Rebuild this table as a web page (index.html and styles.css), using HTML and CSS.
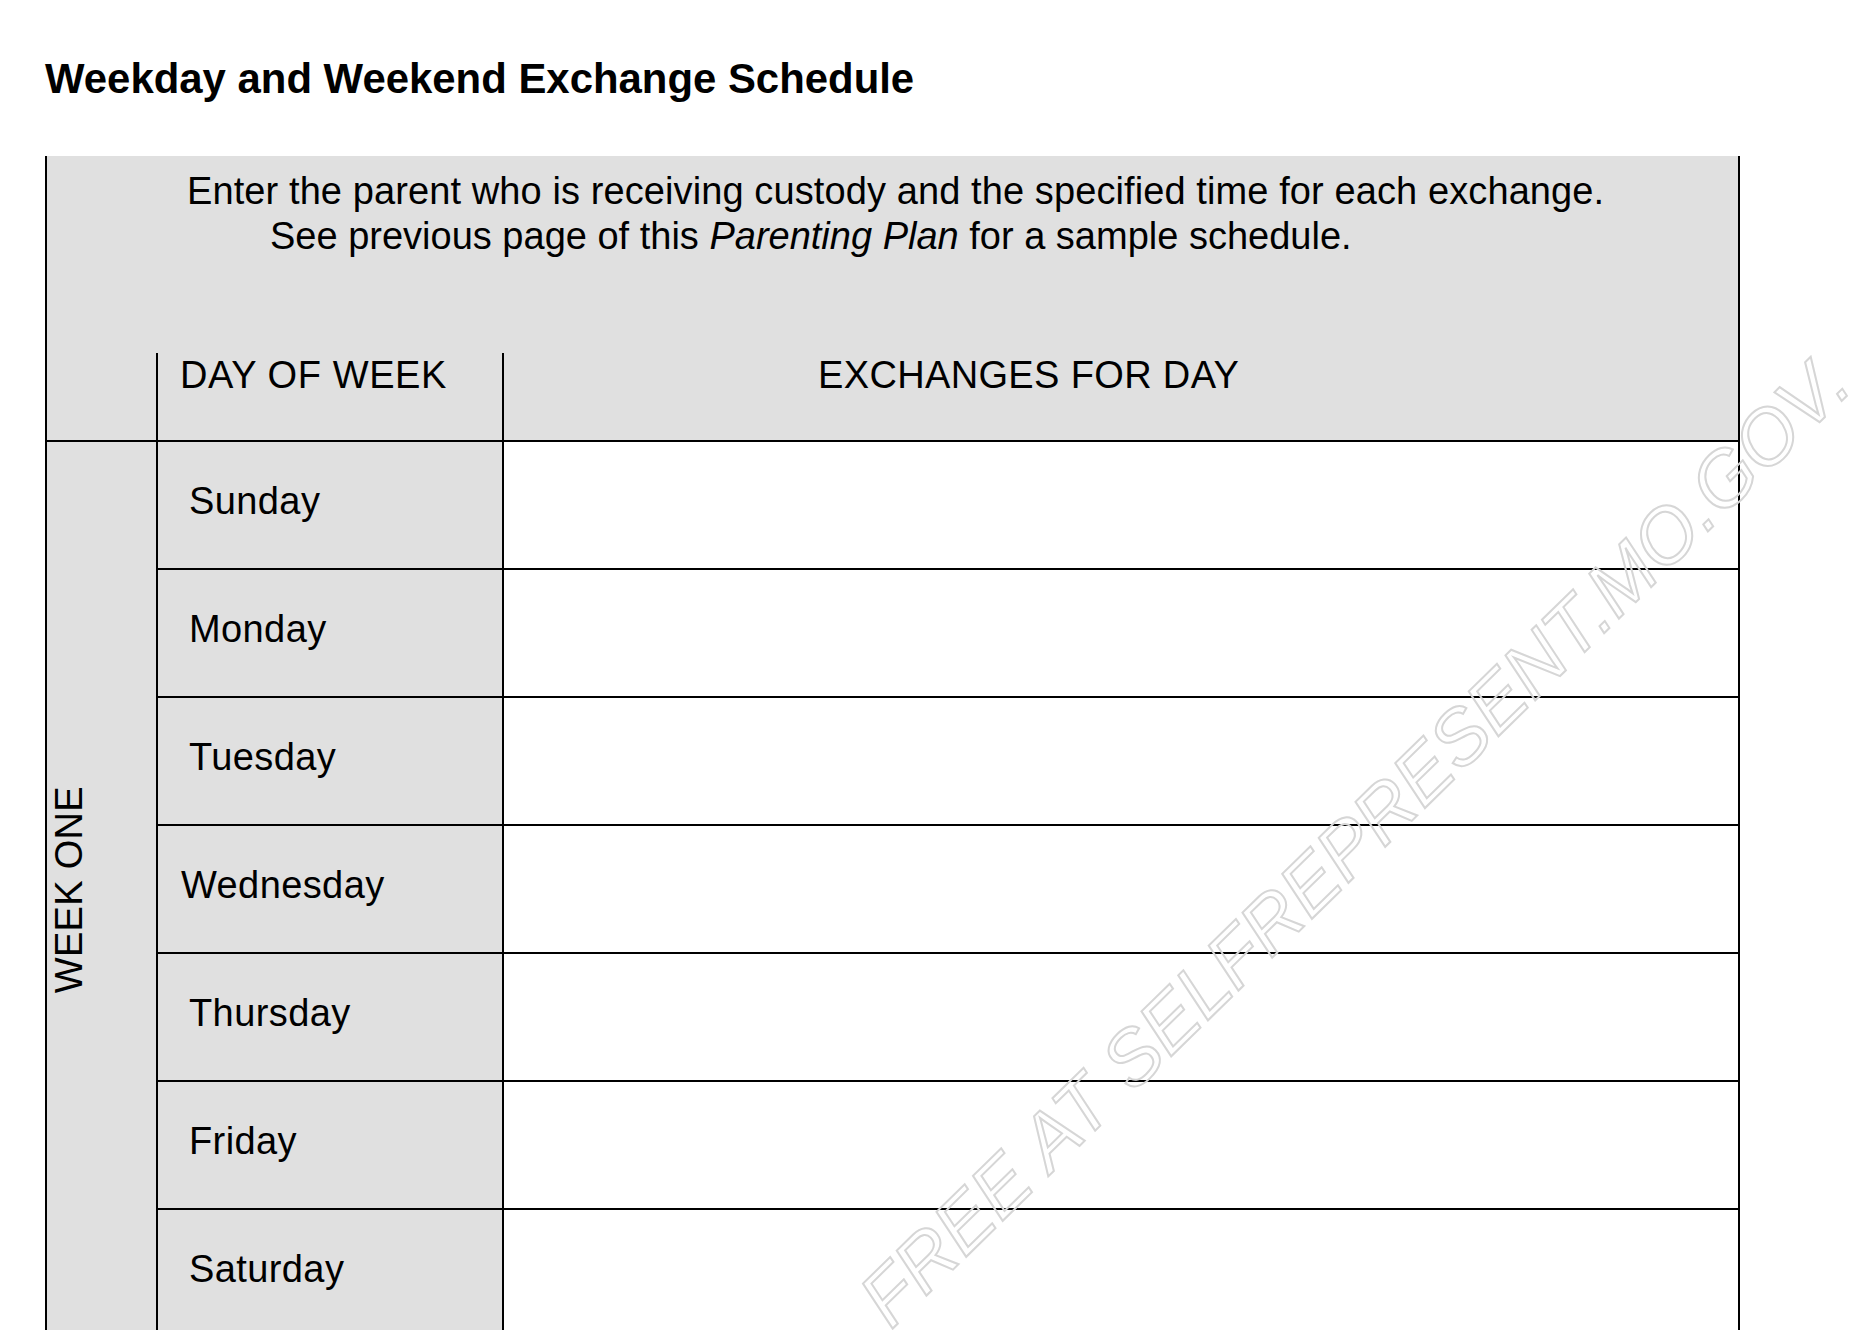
FILE: index.html
```html
<!DOCTYPE html>
<html lang="en">
<head>
<meta charset="utf-8">
<title>Weekday and Weekend Exchange Schedule</title>
<link rel="stylesheet" href="styles.css">
</head>
<body>
<div class="page">
  <h1 class="title">Weekday and Weekend Exchange Schedule</h1>
  <div class="sheet">
    <div class="intro">
      <p class="intro-line intro-line--first">Enter the parent who is receiving custody and the specified time for each exchange.</p>
      <p class="intro-line intro-line--second">See previous page of this <em>Parenting Plan</em> for a sample schedule.</p>
    </div>
    <div class="head-row">
      <div class="head-cell head-cell--week"></div>
      <div class="head-cell head-cell--day">DAY OF WEEK</div>
      <div class="head-cell head-cell--ex">EXCHANGES FOR DAY</div>
    </div>
    <div class="body-grid">
      <div class="week-cell"><span class="week-label">WEEK ONE</span></div>
      <div class="day-cell">Sunday</div><div class="ex-cell"></div>
      <div class="day-cell">Monday</div><div class="ex-cell"></div>
      <div class="day-cell">Tuesday</div><div class="ex-cell"></div>
      <div class="day-cell day-cell--wide">Wednesday</div><div class="ex-cell"></div>
      <div class="day-cell">Thursday</div><div class="ex-cell"></div>
      <div class="day-cell">Friday</div><div class="ex-cell"></div>
      <div class="day-cell">Saturday</div><div class="ex-cell"></div>
    </div>
  </div>
  <div class="watermark">FREE AT SELFREPRESENT.MO.GOV.</div>
</div>
</body>
</html>
```
FILE: styles.css
```css
html, body {
  margin: 0;
  padding: 0;
  background: #ffffff;
}

body {
  font-family: "Liberation Sans", Arial, sans-serif;
  color: #000000;
}

.page {
  position: relative;
  height: 100vh;
  overflow: hidden;
  padding: 55px 0 0 45px;
  box-sizing: border-box;
}

.title {
  margin: 0 0 53px 0;
  font-size: 41.9px;
  line-height: 48px;
  font-weight: bold;
}

.sheet {
  width: 1695px;
  box-sizing: border-box;
  border-left: 2px solid #000;
  border-right: 2px solid #000;
}

.intro {
  background: #e0e0e0;
  height: 197px;
  box-sizing: border-box;
  padding-top: 13px;
  font-size: 38px;
  line-height: 45px;
}

.intro-line {
  margin: 0;
  white-space: nowrap;
}

.intro-line--first {
  padding-left: 140px;
  letter-spacing: 0.1px;
}

.intro-line--second {
  padding-left: 223px;
}

.head-row {
  display: grid;
  grid-template-columns: 111px 346px 1fr;
  height: 89px;
  box-sizing: border-box;
  background: #e0e0e0;
  border-bottom: 2px solid #000;
  font-size: 38px;
  line-height: 44px;
}

.head-cell--week,
.head-cell--day {
  border-right: 2px solid #000;
}

.head-cell--day {
  padding-left: 22px;
  letter-spacing: 0.6px;
}

.head-cell--ex {
  padding-left: 314px;
  letter-spacing: 0.35px;
}

.body-grid {
  display: grid;
  grid-template-columns: 111px 346px 1fr;
  grid-template-rows: repeat(7, 128px);
  font-size: 38px;
  line-height: 44px;
}

.week-cell {
  grid-column: 1;
  grid-row: 1 / span 7;
  background: #e0e0e0;
  border-right: 2px solid #000;
  display: flex;
  align-items: center;
  justify-content: flex-start;
}

.week-label {
  writing-mode: vertical-rl;
  transform: rotate(180deg);
  white-space: nowrap;
  letter-spacing: 0.3px;
}

.day-cell {
  grid-column: 2;
  background: #e0e0e0;
  border-right: 2px solid #000;
  border-bottom: 2px solid #000;
  padding: 37px 0 0 31px;
  letter-spacing: 0.4px;
}

.day-cell--wide {
  padding-left: 23px;
}

.ex-cell {
  grid-column: 3;
  background: #ffffff;
  border-bottom: 2px solid #000;
}

.watermark {
  position: absolute;
  right: 21px;
  top: 323px;
  transform-origin: 100% 65px;
  transform: rotate(-44.35deg);
  white-space: nowrap;
  font-size: 77px;
  line-height: 77px;
  font-style: italic;
  color: transparent;
  -webkit-text-stroke: 2px #d6d6d6;
  pointer-events: none;
}
```
